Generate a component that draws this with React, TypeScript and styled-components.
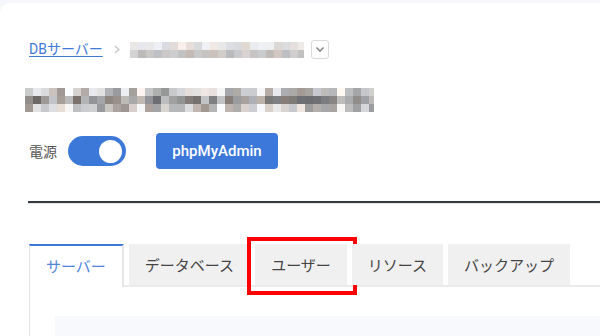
import React from "react";
import styled, { createGlobalStyle } from "styled-components";

const GlobalStyle = createGlobalStyle`
  html, body { margin: 0; padding: 0; }
  body {
    background: #f5f7fa;
    font-family: Roboto, "Noto Sans CJK JP", "Noto Sans", sans-serif;
    overflow: hidden;
    width: 600px;
    height: 336px;
  }
`;

const Page = styled.div`
  padding-top: 3px;
  height: 333px;
`;

const Card = styled.div`
  background: #ffffff;
  border-top-left-radius: 10px;
  height: 333px;
  padding: 37px 0 0 29px;
  box-sizing: border-box;
  overflow: hidden;
`;

const Breadcrumb = styled.nav`
  display: flex;
  align-items: center;
  height: 19px;
`;

const CrumbLink = styled.a`
  color: #3f7ad8;
  font-size: 14px;
  line-height: 19px;
  text-decoration: underline;
  text-underline-offset: 2px;
  cursor: pointer;
`;

const Separator = styled.svg`
  margin: 0 10px 0 11px;
  flex: none;
`;

const MosaicGrid = styled.div<{ $cols: number; $cell: number; $width?: number }>`
  display: grid;
  grid-template-columns: repeat(${(p) => p.$cols}, ${(p) => p.$cell}px);
  grid-auto-rows: ${(p) => p.$cell}px;
  width: ${(p) => (p.$width ? `${p.$width}px` : "auto")};
  overflow: hidden;
  flex: none;
`;

const Cell = styled.div``;

const DropButton = styled.button`
  margin-left: 7px;
  width: 18px;
  height: 19px;
  border: 1px solid #d9d9d9;
  border-radius: 3px;
  background: #fff;
  padding: 0;
  display: flex;
  align-items: center;
  justify-content: center;
  box-sizing: border-box;
`;

const TitleRow = styled.div`
  margin: 29px 0 0 -4px;
`;

const ControlRow = styled.div`
  display: flex;
  align-items: center;
  height: 36px;
  margin-top: 21px;
`;

const PowerLabel = styled.span`
  font-size: 14px;
  color: #555;
  margin-right: 11px;
`;

const Toggle = styled.div<{ $on: boolean }>`
  width: 58px;
  height: 30px;
  border-radius: 15px;
  background: ${(p) => (p.$on ? "#3c78d8" : "#ccc")};
  display: flex;
  align-items: center;
  justify-content: ${(p) => (p.$on ? "flex-end" : "flex-start")};
  padding: 0 4px;
  box-sizing: border-box;
`;

const Knob = styled.div`
  width: 23px;
  height: 23px;
  border-radius: 50%;
  background: #fff;
`;

const PrimaryButton = styled.button`
  margin-left: 30px;
  width: 122px;
  height: 36px;
  border: none;
  border-radius: 4px;
  background: #3b78d9;
  color: #fff;
  font-family: Roboto, "Noto Sans CJK JP", sans-serif;
  font-size: 15px;
  font-weight: 500;
  padding: 0;
`;

const Divider = styled.div`
  margin: 32px 0 0 -1px;
  height: 2px;
  background: #363b43;
  border-bottom: 1px solid #e4e6ea;
`;

const TabList = styled.div`
  display: flex;
  align-items: flex-end;
  gap: 5px;
  margin-top: 40px;
  border-bottom: 2px solid #ebebeb;
  height: 41px;
`;

const Tab = styled.div<{ $active?: boolean }>`
  position: relative;
  height: ${(p) => (p.$active ? "41px" : "41px")};
  margin-bottom: ${(p) => (p.$active ? "-2px" : "0")};
  padding: 0 16px;
  box-sizing: border-box;
  display: flex;
  align-items: center;
  font-size: 15px;
  font-family: "Noto Sans CJK JP", sans-serif;
  color: ${(p) => (p.$active ? "#4f86dc" : "#444")};
  background: ${(p) => (p.$active ? "#fff" : "#f0f0f0")};
  border-top: ${(p) => (p.$active ? "2px solid #3c78d8" : "none")};
  border-left: ${(p) => (p.$active ? "1px solid #e3e3e3" : "none")};
  border-right: ${(p) => (p.$active ? "2px solid #e6e6e6" : "none")};
  ${(p) => (p.$active ? "height: 43px; padding-bottom: 2px;" : "")}
`;

const Highlight = styled.div`
  position: absolute;
  left: -8px;
  right: -10px;
  top: -7px;
  bottom: -10px;
  border: 4px solid #ff0000;
  pointer-events: none;
`;

const Panel = styled.div`
  border-left: 1px solid #e3e3e3;
  padding: 29px 0 0 25px;
  height: 60px;
`;

const PanelInner = styled.div`
  background: #f7f9fc;
  height: 40px;
`;

function makeRng(seed: number) {
  let s = seed;
  return () => {
    s = (s * 1103515245 + 12345) & 0x7fffffff;
    return s / 0x7fffffff;
  };
}

function shade(v: number, tint: number) {
  const r = Math.round(Math.min(255, v + (tint > 0 ? 0 : -tint)));
  const g = Math.round(Math.min(255, v + tint * 0.3));
  const b = Math.round(Math.min(255, v + tint));
  return `rgb(${r},${g},${b})`;
}

type MosaicProps = {
  cols: number;
  rows: number;
  seed: number;
  cell: number;
  width?: number;
  ranges: [number, number][];
  gaps?: number[];
};

function Mosaic({ cols, rows, seed, cell, width, ranges, gaps = [] }: MosaicProps) {
  const rng = makeRng(seed);
  const cells: React.ReactNode[] = [];
  for (let r = 0; r < rows; r++) {
    for (let c = 0; c < cols; c++) {
      const [lo, hi] = ranges[r];
      let v = lo + rng() * (hi - lo);
      const tint = (rng() - 0.5) * 16;
      if (gaps.includes(c)) {
        v = r === 1 ? 175 + rng() * 20 : 245 + rng() * 8;
      }
      cells.push(<Cell key={`${r}-${c}`} style={{ background: shade(v, tint) }} />);
    }
  }
  return (
    <MosaicGrid $cols={cols} $cell={cell} $width={width}>
      {cells}
    </MosaicGrid>
  );
}

const tabs = ["サーバー", "データベース", "ユーザー", "リソース", "バックアップ"];

export default function App() {
  return (
    <>
      <GlobalStyle />
      <Page>
        <Card>
          <Breadcrumb>
            <CrumbLink>DBサーバー</CrumbLink>
            <Separator width="6" height="9" viewBox="0 0 6 9">
              <path d="M1 1 L5 4.5 L1 8" fill="none" stroke="#c4c4c4" strokeWidth="1.3" />
            </Separator>
            <Mosaic
              cols={22}
              rows={2}
              seed={7}
              cell={8}
              width={174}
              ranges={[
                [215, 242],
                [180, 215],
              ]}
            />
            <DropButton>
              <svg width="10" height="7" viewBox="0 0 10 7">
                <path d="M1.5 1.5 L5 5 L8.5 1.5" fill="none" stroke="#8a8a8a" strokeWidth="1.6" />
              </svg>
            </DropButton>
          </Breadcrumb>
          <TitleRow>
            <Mosaic
              cols={44}
              rows={3}
              seed={42}
              cell={8}
              width={349}
              ranges={[
                [150, 240],
                [105, 195],
                [150, 235],
              ]}
              gaps={[5, 14, 24, 29, 39]}
            />
          </TitleRow>
          <ControlRow>
            <PowerLabel>電源</PowerLabel>
            <Toggle $on>
              <Knob />
            </Toggle>
            <PrimaryButton>phpMyAdmin</PrimaryButton>
          </ControlRow>
          <Divider />
          <TabList>
            {tabs.map((t, i) => (
              <Tab key={t} $active={i === 0}>
                {t}
                {i === 2 && <Highlight />}
              </Tab>
            ))}
          </TabList>
          <Panel>
            <PanelInner />
          </Panel>
        </Card>
      </Page>
    </>
  );
}
